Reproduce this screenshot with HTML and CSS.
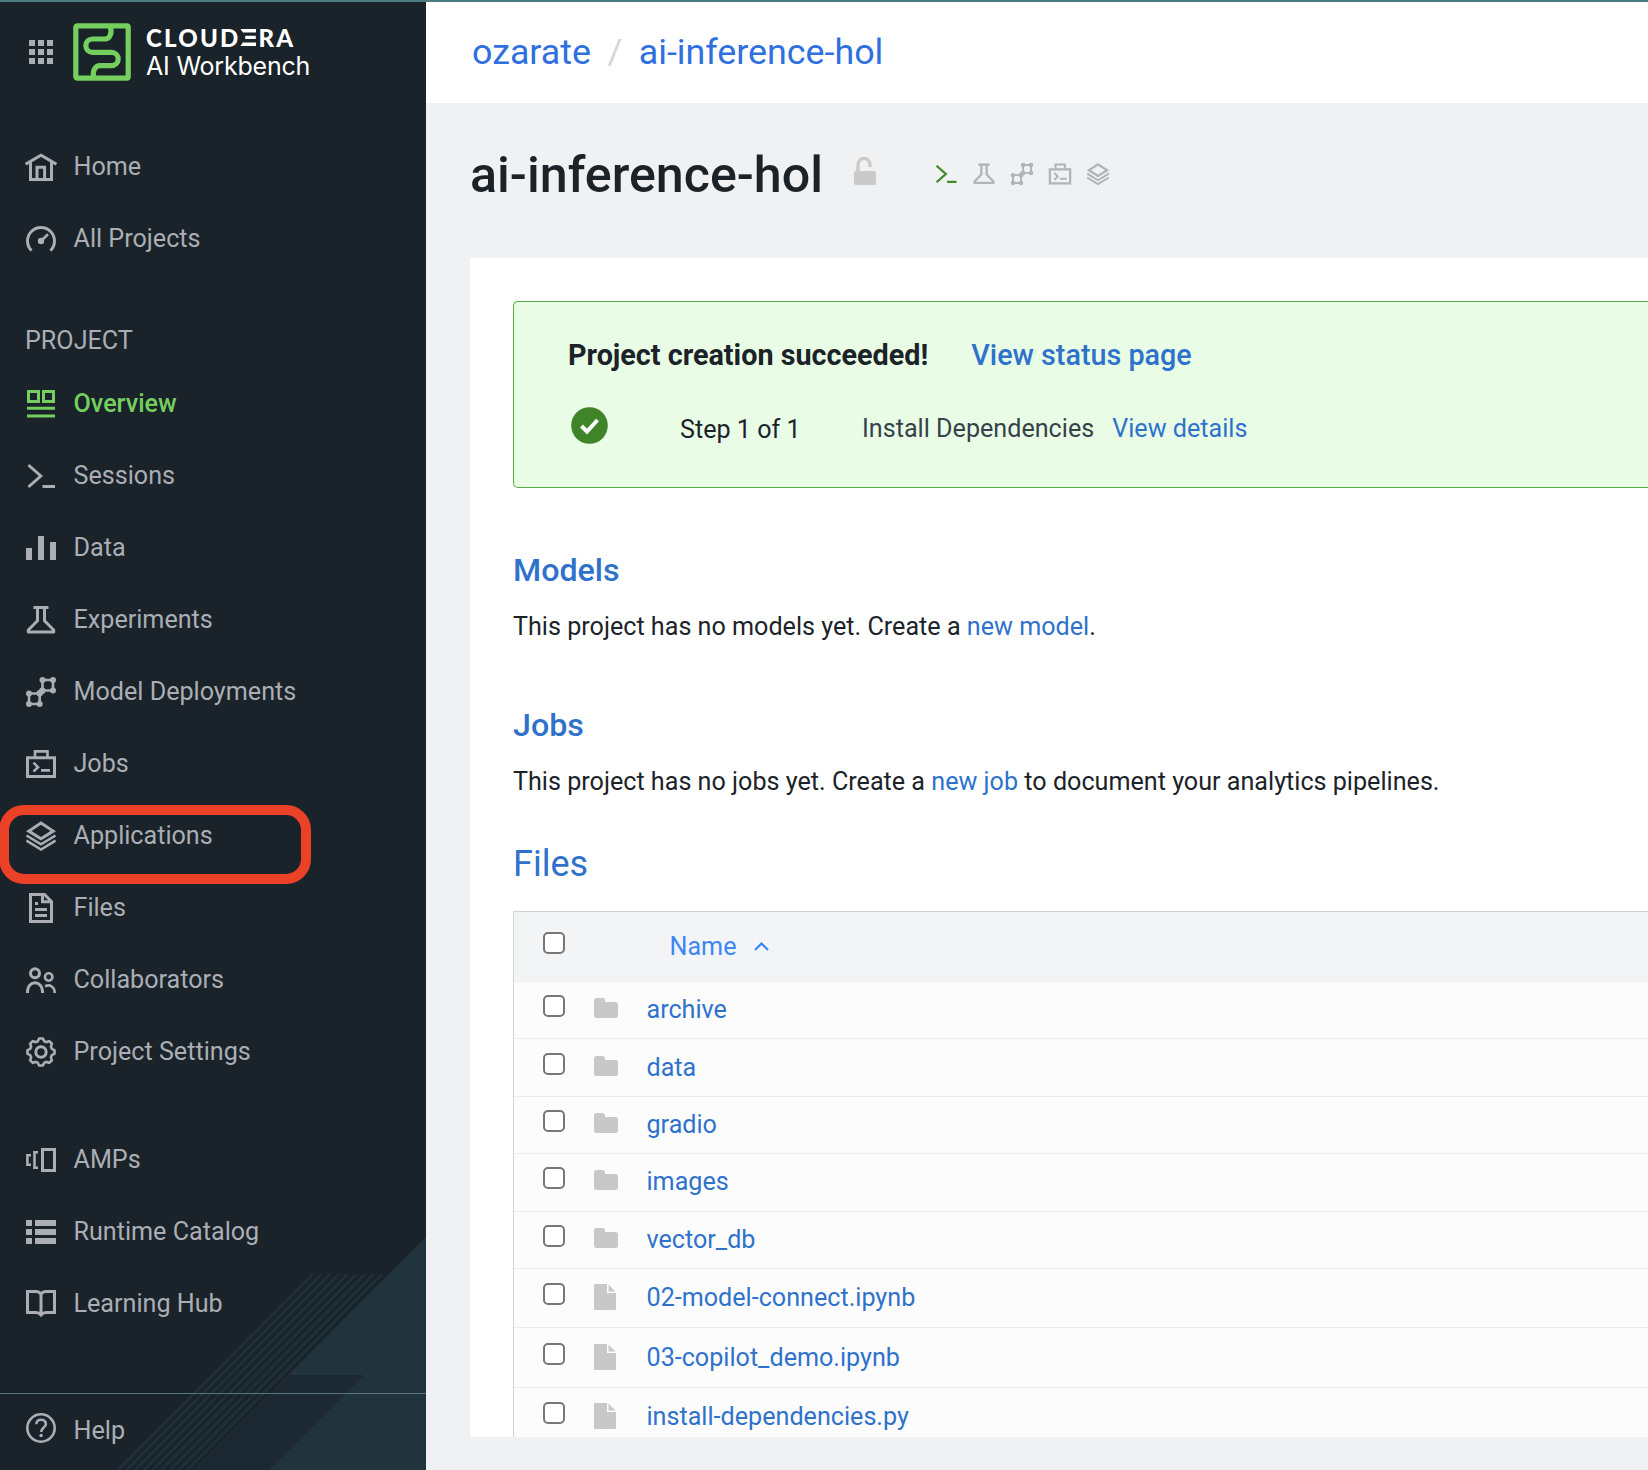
FILE: index.html
```html
<!DOCTYPE html>
<html lang="en">
<head>
<meta charset="utf-8">
<title>ai-inference-hol</title>
<link rel="stylesheet" href="styles.css">
</head>
<body>
<svg class="sprite" aria-hidden="true">
  <symbol id="i-home" viewBox="0 0 32 32"><path d="M.6 13.2 16 4.2l15.4 9M5.5 11v17.5h21V11M12 28.500V16.300h7.600V28.500"/></symbol>
  <symbol id="i-gauge" viewBox="0 0 32 32"><path d="M6.500 27.600a13.500 13.500 0 1 1 19 0"/><circle class="solid" cx="16" cy="18" r="3.200"/><path class="thin" d="m16 18 7-6.800"/></symbol>
  <symbol id="i-overview" viewBox="0 0 32 32"><path d="M3.500 3.500h10v10h-10zM18.500 3.500h10v10h-10zM2 20.300h28M2 28h28"/></symbol>
  <symbol id="i-sessions" viewBox="0 0 32 32"><path d="m3.400 5 12.400 11L3.400 27M17.500 26.500H30"/></symbol>
  <symbol id="i-data" viewBox="0 0 32 32"><path class="solid" d="M1 16h6v12H1zM13 4h6v24h-6zM25 10h6v18h-6z"/></symbol>
  <symbol id="i-flask" viewBox="0 0 32 32"><path class="round" d="M8.500 3.500h15M12.500 3.500v13.200L3.300 26v1.900h25.400V26l-9.200-9.300V3.500"/></symbol>
  <symbol id="i-model" viewBox="0 0 32 32"><path class="thin" d="M17.500 4H28v10.500H17.500zM4 17.500h10.700V28H4z"/><g class="solid"><circle cx="17.500" cy="4" r="3"/><circle cx="28" cy="4" r="3"/><circle cx="28" cy="14.500" r="3"/><circle cx="17.300" cy="14.800" r="3.200"/><circle cx="14.700" cy="17.300" r="3.200"/><circle cx="4" cy="17.500" r="3"/><circle cx="4" cy="28" r="3"/><circle cx="14.700" cy="28" r="3"/></g></symbol>
  <symbol id="i-jobs" viewBox="0 0 32 32"><path d="M2.500 9.700h27v18.800h-27z"/><path class="thin" d="M10 9V3.400h12.500V9M8.500 14.700l4.500 4.500-4.500 4.500M16 22.400h9"/></symbol>
  <symbol id="i-apps" viewBox="0 0 32 32"><path d="m16 3.100 12.200 8L16 18.700 3.800 11.100z"/><path class="thin" d="M1.500 15.500 16 24.300l14.500-8.800M1.500 20.700 16 29.500l14.500-8.800"/></symbol>
  <symbol id="i-files" viewBox="0 0 32 32"><path d="M5.500 2.500h14l7 7v20h-21zM17.500 2.500v7.300h9M10 17.500h12M10 23.500h12M10 11.500h3"/></symbol>
  <symbol id="i-people" viewBox="0 0 32 32"><circle cx="10" cy="9.200" r="4.500"/><circle class="thin" cx="23.700" cy="13" r="3.700"/><path d="M2.500 29v-2a7.500 8.200 0 0 1 15 0v2"/><path class="thin" d="M20 22.300c5-2.500 9.700.7 9.700 6.700"/></symbol>
  <symbol id="i-gear" viewBox="-16 -16 32 32"><path class="thin" d="M13.500-1.800V1.800L10.800 3.200 9.900 5.400 10.800 8.300 8.300 10.800 5.400 9.900 3.200 10.800 1.800 13.500H-1.800L-3.200 10.800-5.400 9.900-8.300 10.800-10.800 8.300-9.900 5.400-10.800 3.200-13.500 1.800V-1.800L-10.800-3.200-9.900-5.400-10.800-8.300-8.300-10.800-5.400-9.900-3.200-10.800-1.800-13.500H1.800L3.200-10.800 5.400-9.900 8.300-10.800 10.800-8.300 9.900-5.400 10.800-3.200z"/><circle r="5.200"/></symbol>
  <symbol id="i-amps" viewBox="0 0 32 32"><path d="M17.500 5.500h12v21h-12z"/><path class="thin" d="M13 8.200H9.500v15.600H13M6 11.200H2.400v9.600H6"/></symbol>
  <symbol id="i-list" viewBox="0 0 32 32"><path class="solid" d="M1 4h6v6H1zM10 4h21v6H10zM1 13h6v6H1zM10 13h21v6H10zM1 22h6v6H1zM10 22h21v6H10z"/></symbol>
  <symbol id="i-book" viewBox="0 0 32 32"><path d="M2.500 3.600H11c3 0 5 2.600 5 2.600s2-2.600 5-2.600h8.500v21H21c-3 0-5 2.400-5 2.400s-2-2.400-5-2.400H2.500zM16 6v21"/></symbol>
  <symbol id="i-help" viewBox="0 0 32 32"><circle class="thin" cx="16" cy="16" r="13.700"/><path class="thin" d="M11.300 12.200c0-6 9.600-5.800 9.600-.3 0 3.600-4.700 3.700-4.700 8"/><circle class="solid" cx="16.100" cy="23.500" r="1.800"/></symbol>
  <symbol id="i-folder" viewBox="0 0 24 20"><path class="solid" d="M2.500 0h6A2.500 2.500 0 0 1 11 2.500V4h10.500A2.500 2.500 0 0 1 24 6.500v11a2.500 2.500 0 0 1-2.500 2.500h-19A2.500 2.500 0 0 1 0 17.500v-15A2.500 2.500 0 0 1 2.500 0z"/></symbol>
  <symbol id="i-file" viewBox="0 0 22 26"><path class="solid" d="M1 0H13v9h9v16a1 1 0 0 1-1 1H1a1 1 0 0 1-1-1V1a1 1 0 0 1 1-1zM14.500.5l7 7h-7z"/></symbol>
</svg>
<div class="page">
  <aside class="sidebar">
    <svg class="decor" width="426" height="240" viewBox="0 0 426 240">
      <path class="decor-light" d="M426 7 193 240h233z"/>
      <path class="decor-dark" d="M287 145h77l-95 95h-76z"/>
      <path class="decor-lines" d="M313 44 118 240M321.700 44 126.700 240M330.300 44 135.300 240M339 44 144 240M347.700 44 152.700 240M356.300 44 161.300 240M365 44 170 240M373.700 44 178.700 240M382.300 44 187.300 240"/>
    </svg>
    <div class="brand">
      <svg class="launcher" width="24" height="24" viewBox="0 0 24 24"><path d="M0 0h6v6H0zM9 0h6v6H9zM18 0h6v6h-6zM0 9h6v6H0zM9 9h6v6H9zM18 9h6v6h-6zM0 18h6v6H0zM9 18h6v6H9zM18 18h6v6h-6z"/></svg>
      <svg class="logo" width="58" height="58" viewBox="0 0 58 58"><rect x="2.800" y="2.800" width="52.400" height="52.400" rx="1.500"/><path d="M37.300 4c2 6-.5 12-5.300 12H19.500a6.650 6.650 0 0 0 0 13.300H38.500a6.700 6.700 0 0 1 0 13.400H27c-5 0-7.500 5-6.500 11.500"/></svg>
      <div class="brand-text">
        <span class="brand-name">CLOUD<span class="bar-e">E</span>RA</span>
        <span class="brand-product">AI Workbench</span>
      </div>
    </div>
    <nav class="nav">
      <a class="item"><svg><use href="#i-home"/></svg><span>Home</span></a>
      <a class="item"><svg><use href="#i-gauge"/></svg><span>All Projects</span></a>
      <div class="section">PROJECT</div>
      <a class="item active"><svg><use href="#i-overview"/></svg><span>Overview</span></a>
      <a class="item"><svg><use href="#i-sessions"/></svg><span>Sessions</span></a>
      <a class="item"><svg><use href="#i-data"/></svg><span>Data</span></a>
      <a class="item"><svg><use href="#i-flask"/></svg><span>Experiments</span></a>
      <a class="item"><svg><use href="#i-model"/></svg><span>Model Deployments</span></a>
      <a class="item"><svg><use href="#i-jobs"/></svg><span>Jobs</span></a>
      <a class="item"><svg><use href="#i-apps"/></svg><span>Applications</span><i class="highlight"></i></a>
      <a class="item"><svg><use href="#i-files"/></svg><span>Files</span></a>
      <a class="item"><svg><use href="#i-people"/></svg><span>Collaborators</span></a>
      <a class="item"><svg><use href="#i-gear"/></svg><span>Project Settings</span></a>
      <a class="item spaced"><svg><use href="#i-amps"/></svg><span>AMPs</span></a>
      <a class="item"><svg><use href="#i-list"/></svg><span>Runtime Catalog</span></a>
      <a class="item"><svg><use href="#i-book"/></svg><span>Learning Hub</span></a>
    </nav>
    <a class="item help"><svg><use href="#i-help"/></svg><span>Help</span></a>
  </aside>
  <main class="main">
    <header class="crumbs"><a>ozarate</a><span class="slash">/</span><a>ai-inference-hol</a></header>
    <div class="title-row">
      <h1>ai-inference-hol</h1>
      <svg class="lock" width="22" height="28" viewBox="0 0 22 28"><path d="M4 15V8.500a6 7 0 0 1 12-.5v2" class="shackle"/><rect y="14" width="22" height="14" rx="2"/></svg>
      <div class="kinds">
        <svg class="on"><use href="#i-sessions"/></svg><svg><use href="#i-flask"/></svg><svg><use href="#i-model"/></svg><svg><use href="#i-jobs"/></svg><svg><use href="#i-apps"/></svg>
      </div>
    </div>
    <section class="card">
      <div class="alert">
        <div class="alert-head"><strong>Project creation succeeded!</strong><a>View status page</a></div>
        <div class="alert-step">
          <svg class="check" width="37" height="37" viewBox="0 0 37 37"><circle cx="18.500" cy="18.500" r="18.300"/><path d="m10.500 19 5.500 5.500 10.500-11.500"/></svg>
          <span class="step">Step 1 of 1</span><span class="task">Install Dependencies</span><a>View details</a>
        </div>
      </div>
      <h2 class="models">Models</h2>
      <p>This project has no models yet. Create a <a>new model</a>.</p>
      <h2 class="jobs">Jobs</h2>
      <p>This project has no jobs yet. Create a <a>new job</a> to document your analytics pipelines.</p>
      <h2 class="files">Files</h2>
      <div class="table">
        <div class="thead"><i class="box"></i><span>Name</span><svg class="caret" width="15" height="9" viewBox="0 0 15 9"><path d="m1 8 6.500-6.500L14 8"/></svg></div>
        <div class="row"><i class="box"></i><svg class="folder"><use href="#i-folder"/></svg><a>archive</a></div>
        <div class="row"><i class="box"></i><svg class="folder"><use href="#i-folder"/></svg><a>data</a></div>
        <div class="row"><i class="box"></i><svg class="folder"><use href="#i-folder"/></svg><a>gradio</a></div>
        <div class="row"><i class="box"></i><svg class="folder"><use href="#i-folder"/></svg><a>images</a></div>
        <div class="row"><i class="box"></i><svg class="folder"><use href="#i-folder"/></svg><a>vector_db</a></div>
        <div class="row tall"><i class="box"></i><svg class="doc"><use href="#i-file"/></svg><a>02-model-connect.ipynb</a></div>
        <div class="row tall"><i class="box"></i><svg class="doc"><use href="#i-file"/></svg><a>03-copilot_demo.ipynb</a></div>
        <div class="row tall"><i class="box"></i><svg class="doc"><use href="#i-file"/></svg><a>install-dependencies.py</a></div>
      </div>
    </section>
  </main>
</div>
</body>
</html>
```
FILE: styles.css
```css
* { box-sizing: border-box; }
body { margin: 0; font-family: Roboto, "Liberation Sans", sans-serif; font-size: 25.150px; color: #1b2329; }
.sprite { position: absolute; width: 0; height: 0; }
svg { flex: none; fill: none; stroke: currentColor; stroke-width: 3; }
.solid { fill: currentColor; stroke: none; }
.thin { stroke-width: 2.6; }
.round { stroke-linejoin: round; }
a { color: #2f72cc; }

.page { display: flex; width: 1648px; height: 1470px; border-top: 2px solid #4c7b80; background: #f0f1f3; overflow: hidden; }

.sidebar { position: relative; display: flex; flex-direction: column; width: 426px; flex: none; background: #192329; color: #abaeb4; }
.decor { position: absolute; left: 0; bottom: 0; stroke: none; }
.decor-light { fill: #21333d; }
.decor-dark { fill: #1c2932; }
.decor-lines { stroke: #1e303a; stroke-width: 2.700; }
.brand { display: flex; align-items: flex-start; height: 129px; padding: 21px 0 0 29px; color: #fff; }
.launcher { margin: 17px 20px 0 0; fill: #abaeb4; stroke: none; }
.logo { stroke: #74cf5f; stroke-width: 5.200; }
.brand-text { display: flex; flex-direction: column; margin-left: 15px; }
.brand-name { font: 900 24px/28px Lato, sans-serif; letter-spacing: 2.200px; margin-top: 1px; white-space: nowrap; }
/* the wordmark's E is three separate bars */
.bar-e { position: relative; display: inline-block; width: 18px; color: transparent; }
.bar-e::before { content: ""; position: absolute; left: 0; top: 5px; width: 16px; height: 17px; background: #fff; clip-path: polygon(0 0, 100% 0, 100% 20%, 16% 20%, 30% 40%, 96% 40%, 96% 59%, 30% 59%, 16% 80%, 100% 80%, 100% 100%, 0 100%, 30% 59%, 30% 40%); }
.brand-product { margin-top: -1px; font: 400 25px/30px Inter, sans-serif; letter-spacing: -.2px; white-space: nowrap; }

.nav { position: relative; display: flex; flex-direction: column; }
.item { position: relative; display: flex; align-items: center; gap: 16.500px; height: 72px; padding-left: 25px; color: inherit; white-space: nowrap; }
.item svg { width: 32px; height: 32px; }
.item span { padding-bottom: 2px; }
.item.active { color: #74cf5f; font-weight: 500; }
.item.spaced { margin-top: 36px; }
.section { height: 93px; padding: 50px 0 0 25px; line-height: 31px; }
.help { margin-top: auto; height: 77px; border-top: 1px solid #577680; }
.help svg { margin-top: -9px; }
.help span { margin-top: -2px; }
.highlight { position: absolute; left: -1px; top: 5px; width: 312px; height: 79px; border: 10px solid #eb4126; border-radius: 25px; }

.main { flex: 1; min-width: 0; }
.crumbs { display: flex; align-items: center; height: 101px; padding: 0 0 1px 46px; background: #fff; font-size: 35.800px; }
.crumbs a { color: #2f6fde; }
.slash { margin: 0 16.500px; color: #d4d6d9; }
.title-row { display: flex; align-items: center; height: 155px; padding-left: 44px; padding-bottom: 14px; }
h1 { margin: 2px 0 0; font-size: 50.200px; font-weight: 500; white-space: nowrap; }
.lock { margin-left: 31px; margin-top: -6px; fill: #cacaca; stroke: none; }
.shackle { fill: none; stroke: #cacaca; stroke-width: 3.500; }
.kinds { display: flex; gap: 14px; margin-left: 57.500px; color: #b0b3b7; }
.kinds svg { width: 24px; height: 24px; }
.kinds .on { color: #3f8a24; }

.card { height: 1179px; margin-left: 44px; padding: 43px 0 0 43px; background: #fff; overflow: hidden; white-space: nowrap; }
.alert { height: 187px; padding: 36px 0 0 54px; border: 1px solid #57ab48; border-right: 0; border-radius: 5px 0 0 5px; background: #e9fde6; }
.alert-head { display: flex; gap: 43px; line-height: 34px; font-size: 28.750px; font-weight: 500; }
.alert-head strong { font-weight: 700; }
.alert-step { display: flex; align-items: center; height: 40px; margin-top: 35px; }
.check { margin: -4px 72px 0 3px; fill: #3f8428; stroke: none; }
.check path { fill: none; stroke: #fff; stroke-width: 4; }
.step { margin-top: 4px; width: 182px; }
.task { margin: 2px 18px 0 0; color: #36424a; }
.alert-step a { margin-top: 2px; }
h2 { margin: 0; color: #2f72cc; font-size: 32.200px; font-weight: 500; line-height: 40px; }
p { margin: 0; line-height: 30px; }
.models { margin-top: 62px; }
.models + p, .jobs + p { margin-top: 22px; }
.jobs { margin-top: 63px; }
.files { margin-top: 47px; font-size: 36px; font-weight: 400; }
.table { margin-top: 27px; border: solid #cfd3d6; border-width: 1px 0 0 1px; background: #fcfcfc; }
.thead { display: flex; align-items: center; height: 70px; padding-left: 29px; background: #f3f4f6; border-bottom: 1px solid #ededee; color: #3d87f5; }
.thead span { margin: -1px 17px 0 104.500px; }
.thead .box { margin-top: -8px; }
.caret { stroke-width: 2.200; }
.box { flex: none; width: 22px; height: 22px; border: 2px solid #777; border-radius: 5px; background: #fff; }
.row { display: flex; align-items: center; height: 57.400px; padding-left: 29px; border-bottom: 1px solid #ededee; }
.row.tall { height: 59.500px; }
.row .box { margin: -8px 29px 0 0; }
.row svg { color: #c8c8c8; }
.row a { margin-top: -1px; }
.row .folder { width: 24px; height: 20px; margin: -4px 28.500px 0 0; }
.row .doc { width: 22px; height: 26px; margin: -2px 30.500px 0 0; }
```
